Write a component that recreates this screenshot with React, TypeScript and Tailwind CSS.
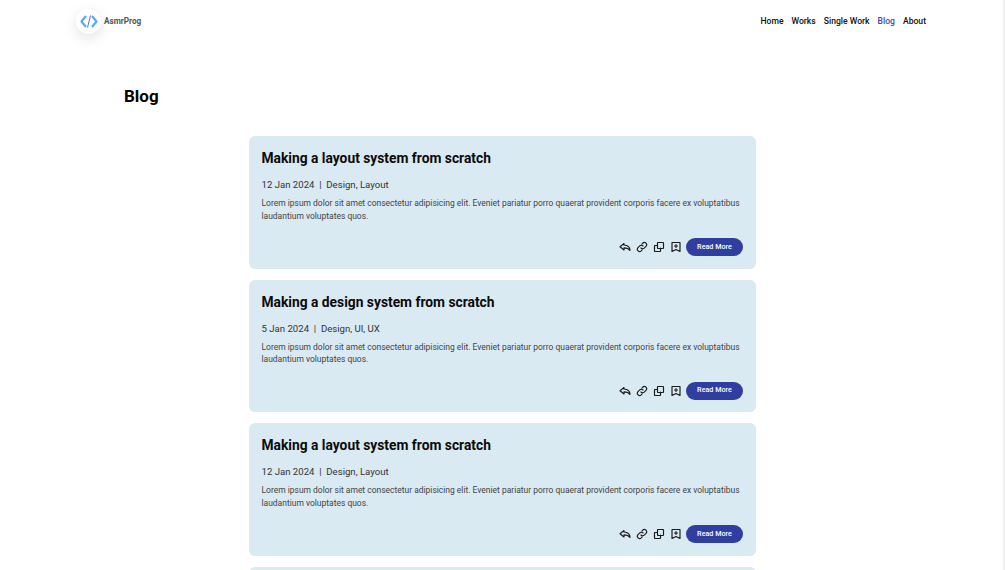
import React from "react";

const posts = [
  { title: "Making a layout system from scratch", date: "12 Jan 2024", tags: "Design, Layout" },
  { title: "Making a design system from scratch", date: "5 Jan 2024", tags: "Design, UI, UX" },
  { title: "Making a layout system from scratch", date: "12 Jan 2024", tags: "Design, Layout" },
  { title: "Making a design system from scratch", date: "5 Jan 2024", tags: "Design, UI, UX" },
];

const ic = { width: 12, height: 12, viewBox: "0 0 24 24", fill: "none", stroke: "#1a1a1a", strokeWidth: 2.3, strokeLinecap: "round" as const, strokeLinejoin: "round" as const };

function Icons() {
  return (
    <div className="flex items-center gap-[5px]">
      <svg {...ic}>
        <path d="M10 5 2 11.500 10 18v-4.200c5.500 0 9 1.200 12 5.200 0-6.500-4.500-10.500-12-11V5Z" />
      </svg>
      <svg {...ic}>
        <path d="M10 14a4.500 4.500 0 0 0 6.500.300l3.500-3.500a4.600 4.600 0 0 0-6.500-6.500l-1.800 1.800" />
        <path d="M14 10a4.500 4.500 0 0 0-6.500-.300L4 13.200a4.600 4.600 0 0 0 6.500 6.500l1.800-1.800" />
      </svg>
      <svg {...ic}>
        <rect x="9" y="3" width="12" height="12" rx="1" />
        <path d="M9 9H4a1 1 0 0 0-1 1v10a1 1 0 0 0 1 1h10a1 1 0 0 0 1-1v-6" />
      </svg>
      <svg {...ic}>
        <path d="M4 3h16v18l-8-4-8 4V3Z" />
        <path d="M12 7v6M9 10h6" />
      </svg>
    </div>
  );
}

export default function App() {
  return (
    <div className="h-[570px] overflow-hidden border-r-2 border-[#f0f0f0] bg-white font-['Roboto',sans-serif] text-[#111]">
      <header className="flex h-[42px] items-center justify-between pl-[76px] pr-[77px]">
        <div className="flex items-center gap-[3px]">
          <div className="flex h-[25px] w-[25px] items-center justify-center rounded-full bg-white shadow-[0_4px_14px_rgba(0,0,0,0.12)]">
            <svg width="18" height="15" viewBox="0 0 18 15" fill="none" stroke="#5aa9f5" strokeWidth="2.200" strokeLinejoin="round">
              <path d="M6 2 1.500 7.500 6 13" />
              <path d="M12 2l4.500 5.500L12 13" />
              <path d="M10.500 1.500 7.500 13.500" stroke="#3f7fd8" strokeWidth="1" />
            </svg>
          </div>
          <span className="text-[8.2px] font-bold text-[#555]">AsmrProg</span>
        </div>
        <nav className="flex items-center gap-[8px] text-[8.6px] font-medium">
          <a>Home</a>
          <a>Works</a>
          <a>Single Work</a>
          <a className="text-[#3949ab]">Blog</a>
          <a>About</a>
        </nav>
      </header>
      <main>
        <h1 className="ml-[124px] mt-[44px] text-[17px] font-bold leading-[21px] text-black">Blog</h1>
        <div className="ml-[249px] mt-[29px] flex w-[507px] flex-col gap-[11px]">
          {posts.map((p, i) => (
            <article key={i} className="flex h-[132.7px] shrink-0 flex-col rounded-[6px] bg-[#daeaf2] pl-[12.5px] pr-[13px] pt-[12px]">
              <h2 className="text-[13.8px] font-bold leading-[20px] text-[#0b0b0b]">{p.title}</h2>
              <p className="mt-[10px] text-[9.6px] leading-[14px] text-[#333]">
                {p.date} &nbsp;|&nbsp; {p.tags}
              </p>
              <p className="mt-[5px] text-[8.48px] leading-[12.5px] text-[#444]">
                Lorem ipsum dolor sit amet consectetur adipisicing elit. Eveniet pariatur porro quaerat provident corporis facere ex voluptatibus laudantium voluptates quos.
              </p>
              <div className="mt-[16px] flex items-center justify-end gap-[4px]">
                <Icons />
                <button className="h-[18px] w-[57px] rounded-[9px] bg-[#303f9f] text-[7.2px] font-medium text-white">Read More</button>
              </div>
            </article>
          ))}
        </div>
      </main>
    </div>
  );
}
